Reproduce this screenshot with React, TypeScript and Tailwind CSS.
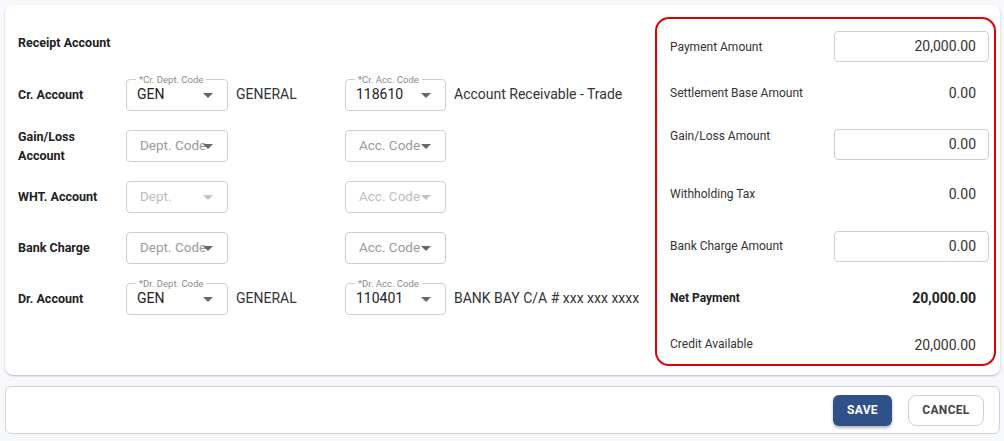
import React from "react";

type SelectProps = {
  width: string;
  label?: string;
  value?: string;
  placeholder?: string;
  disabled?: boolean;
};

function Caret({ disabled }: { disabled?: boolean }) {
  return (
    <svg width="10" height="5" viewBox="0 0 10 5" className={disabled ? "text-[#c4c4c4]" : "text-[#666]"}>
      <path d="M0 0 L10 0 L5 5 Z" fill="currentColor" />
    </svg>
  );
}

function Select({ width, label, value, placeholder, disabled }: SelectProps) {
  return (
    <div className={`relative h-[32px] ${width} shrink-0 rounded-[4px] border border-[#cfcfcf] bg-white flex items-center`}>
      {label && (
        <span className="absolute -top-[6px] left-[9px] px-[3px] bg-white text-[9.5px] leading-[11px] text-[#8a8a8a]">
          {label}
        </span>
      )}
      {value ? (
        <span className="pl-[10px] text-[14px] text-[#222]">{value}</span>
      ) : (
        <span className={`pl-[13px] text-[13.5px] ${disabled ? "text-[#bdbdbd]" : "text-[#9a9a9a]"}`}>{placeholder}</span>
      )}
      <span className="absolute right-[14px] top-[13px] flex">
        <Caret disabled={disabled} />
      </span>
    </div>
  );
}

const rows = [
  {
    label: "Cr. Account",
    dept: { label: "*Cr. Dept. Code", value: "GEN" },
    deptName: "GENERAL",
    acc: { label: "*Cr. Acc. Code", value: "118610" },
    accName: "Account Receivable - Trade",
  },
  { label: "Gain/Loss Account", dept: { placeholder: "Dept. Code" }, acc: { placeholder: "Acc. Code" } },
  { label: "WHT. Account", dept: { placeholder: "Dept.", disabled: true }, acc: { placeholder: "Acc. Code", disabled: true } },
  { label: "Bank Charge", dept: { placeholder: "Dept. Code" }, acc: { placeholder: "Acc. Code" } },
  {
    label: "Dr. Account",
    dept: { label: "*Dr. Dept. Code", value: "GEN" },
    deptName: "GENERAL",
    acc: { label: "*Dr. Acc. Code", value: "110401" },
    accName: "BANK BAY C/A # xxx xxx xxxx",
  },
];

function AmountInput({ value }: { value: string }) {
  return (
    <div className="w-[155px] h-[31px] rounded-[4px] border border-[#cfcfcf] bg-white flex items-center justify-end pr-[12px] text-[14px] text-[#333]">
      {value}
    </div>
  );
}

export default function App() {
  return (
    <div className="min-h-screen bg-[#f7f8fb] pt-[5px] px-[3px] font-['Roboto',sans-serif] text-[#222]">
      <div className="ml-[2px] mr-[1px] h-[370px] rounded-[8px] bg-white shadow-[0_1px_2px_rgba(0,0,0,0.25)] flex pt-[12px] pb-[9px] pr-[4px]">
        {/* Left: receipt account */}
        <div className="flex-1 pl-[13px] pt-[18px]">
          <div className="h-[16px] text-[12.5px] font-bold leading-[16px]">Receipt Account</div>
          <div className="mt-[18px] flex flex-col">
            {rows.map((r) => (
              <div key={r.label} className="h-[51px] flex items-center">
                <div className="w-[108px] shrink-0 pr-[14px] text-[12.5px] font-bold leading-[19px] text-[#222]">
                  {r.label}
                </div>
                <Select width="w-[102px]" {...r.dept} />
                <div className="w-[117px] shrink-0 pl-[8px] text-[14px] text-[#333]">{r.deptName}</div>
                <Select width="w-[101px]" {...r.acc} />
                <div className="pl-[8px] text-[14px] text-[#333] whitespace-nowrap">{r.accName}</div>
              </div>
            ))}
          </div>
        </div>

        {/* Right: amounts */}
        <div className="w-[341px] shrink-0 rounded-[14px] border-2 border-[#e00000] pl-[13px] pr-[5px] pt-[12px] text-[12px] text-[#333]">
          <div className="h-[31px] flex items-center justify-between">
            <span>Payment Amount</span>
            <AmountInput value="20,000.00" />
          </div>
          <div className="mt-[21px] h-[20px] flex items-center justify-between pr-[13px]">
            <span>Settlement Base Amount</span>
            <span className="text-[14px]">0.00</span>
          </div>
          <div className="mt-[26px] flex items-start justify-between">
            <span className="leading-[14px]">Gain/Loss Amount</span>
            <AmountInput value="0.00" />
          </div>
          <div className="mt-[24px] h-[20px] flex items-center justify-between pr-[13px]">
            <span>Withholding Tax</span>
            <span className="text-[14px]">0.00</span>
          </div>
          <div className="mt-[27px] h-[31px] flex items-center justify-between">
            <span className="-mt-[2px]">Bank Charge Amount</span>
            <AmountInput value="0.00" />
          </div>
          <div className="mt-[26px] h-[20px] flex items-center justify-between pr-[13px] font-bold text-[#222]">
            <span>Net Payment</span>
            <span className="text-[14px]">20,000.00</span>
          </div>
          <div className="mt-[27px] h-[20px] flex items-center justify-between pr-[13px]">
            <span className="-mt-[2px]">Credit Available</span>
            <span className="text-[14px]">20,000.00</span>
          </div>
        </div>
      </div>

      {/* Footer actions */}
      <div className="mt-[11px] ml-[2px] mr-[1px] h-[48px] rounded-[6px] border border-[#d2d2d2] bg-white flex items-center justify-end gap-[16px] pr-[15px]">
        <button className="w-[59px] h-[31px] rounded-[6px] bg-[#2f5189] text-white text-[12px] font-bold tracking-[0.3px] shadow-[0_2px_3px_rgba(0,0,0,0.3)]">
          SAVE
        </button>
        <button className="w-[76px] h-[31px] rounded-[8px] border border-[#cfcfcf] bg-white text-[#444] text-[12px] font-bold tracking-[0.3px]">
          CANCEL
        </button>
      </div>
    </div>
  );
}
